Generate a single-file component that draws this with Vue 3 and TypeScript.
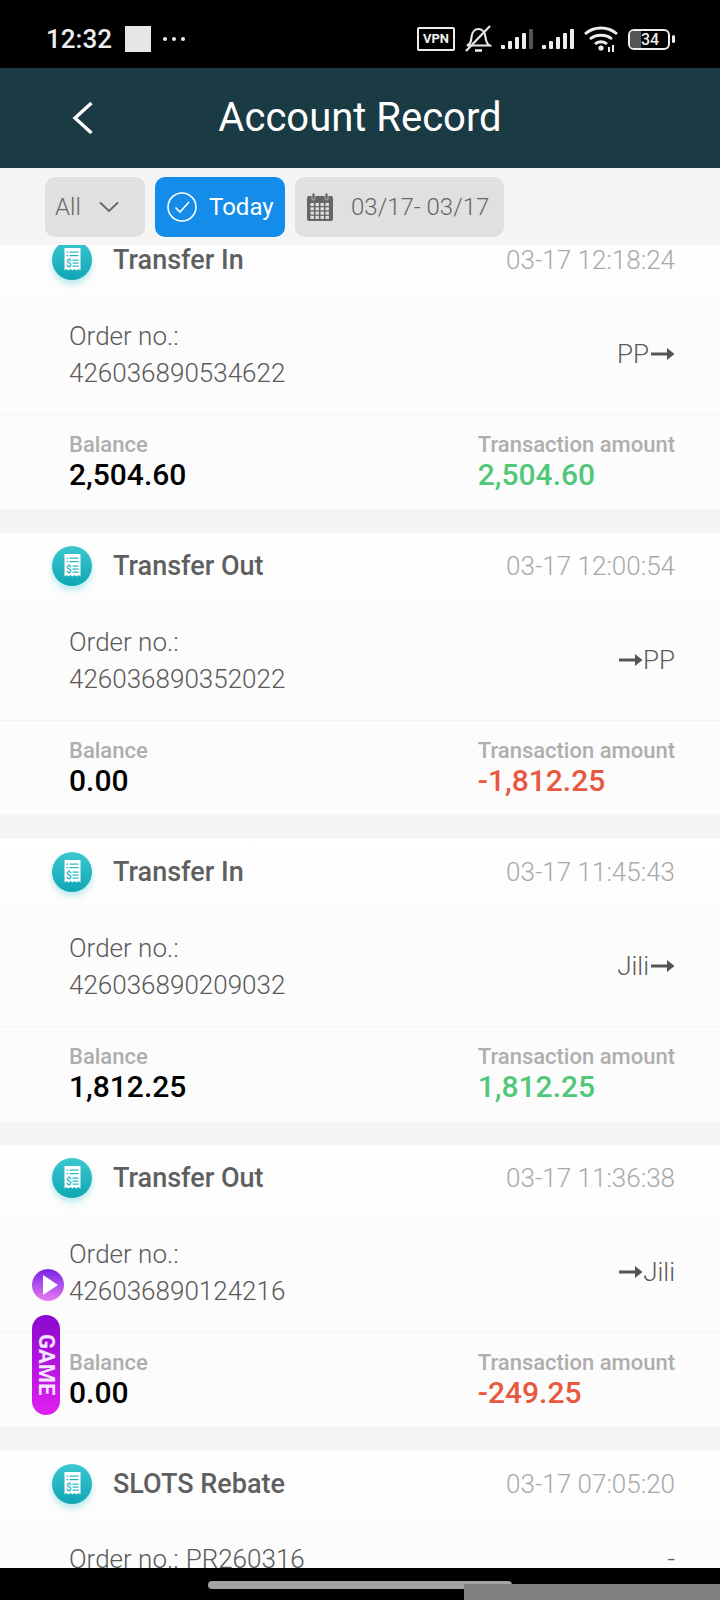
<script setup lang="ts">
interface Row {
  title: string
  time: string
  order: string
  inline?: boolean
  from?: string
  to?: string
  note?: string
  balance: string
  amount: string
  kind: 'in' | 'out'
}

const rows: Row[] = [
  { title: 'Transfer In', time: '03-17 12:18:24', order: '426036890534622', from: 'PP', balance: '2,504.60', amount: '2,504.60', kind: 'in' },
  { title: 'Transfer Out', time: '03-17 12:00:54', order: '426036890352022', to: 'PP', balance: '0.00', amount: '-1,812.25', kind: 'out' },
  { title: 'Transfer In', time: '03-17 11:45:43', order: '426036890209032', from: 'Jili', balance: '1,812.25', amount: '1,812.25', kind: 'in' },
  { title: 'Transfer Out', time: '03-17 11:36:38', order: '426036890124216', to: 'Jili', balance: '0.00', amount: '-249.25', kind: 'out' },
  { title: 'SLOTS Rebate', time: '03-17 07:05:20', order: 'PR260316', inline: true, note: '-', balance: '', amount: '', kind: 'in' },
]

const calCells = [0, 1, 2, 3]
</script>

<template>
  <div class="phone">
    <div class="status">
      <span class="clock">12:32</span>
      <span class="square"></span>
      <span class="dots"><i></i><i></i><i></i></span>
      <div class="status-right">
        <span class="vpn">VPN</span>
        <svg class="bell" width="27" height="28" viewBox="0 0 27 28" fill="none" stroke="#e8e8e8" stroke-width="2.200">
          <path d="M2 20.500c3-1.500 4-3 4.500-8.500.5-5 3.500-8 7-8s6.500 3 7 8c.5 5 1.500 7 4 8.500z" />
          <path d="M10 25.500h7" stroke-width="2.600" />
          <path d="M1 26 25 1" stroke-width="2.200" />
        </svg>
        <svg class="signal" width="33" height="22" viewBox="0 0 33 22">
          <rect x="0" y="17" width="4" height="4" rx="1" fill="#eee" />
          <rect x="7" y="13" width="4" height="8" rx="1" fill="#eee" />
          <rect x="14" y="9" width="4" height="12" rx="1" fill="#eee" />
          <rect x="21" y="5" width="4" height="16" rx="1" fill="#eee" />
          <rect x="28" y="1" width="4" height="20" rx="1" fill="#555" />
        </svg>
        <svg class="signal" width="33" height="22" viewBox="0 0 33 22">
          <rect x="0" y="17" width="4" height="4" rx="1" fill="#eee" />
          <rect x="7" y="13" width="4" height="8" rx="1" fill="#eee" />
          <rect x="14" y="9" width="4" height="12" rx="1" fill="#eee" />
          <rect x="21" y="5" width="4" height="16" rx="1" fill="#eee" />
          <rect x="28" y="1" width="4" height="20" rx="1" fill="#eee" />
        </svg>
        <svg class="wifi" width="34" height="26" viewBox="0 0 34 26" fill="none" stroke="#eee" stroke-width="2.800">
          <path d="M1 8c9-8 23-8 32 0" />
          <path d="M6 13c6-5 16-5 22 0" />
          <path d="M11 18c3-3 9-3 12 0" />
          <circle cx="17" cy="22" r="2.600" fill="#eee" stroke="none" />
          <path d="M25 21v5M29 19v7" stroke-width="2" />
        </svg>
        <div class="battery">
          <div class="battery-body"><span class="battery-fill"></span><span class="battery-num">34</span></div>
          <span class="battery-tip"></span>
        </div>
      </div>
    </div>

    <header class="topbar">
      <svg class="back" width="22" height="34" viewBox="0 0 22 34" fill="none" stroke="#fff" stroke-width="3.400">
        <path d="M19.500 2 3 17l16.500 15" />
      </svg>
      <h1>Account Record</h1>
    </header>

    <div class="filters">
      <div class="chip chip-all">
        <span>All</span>
        <svg width="20" height="12" viewBox="0 0 20 12" fill="none" stroke="#666" stroke-width="1.800"><path d="M1 1.500 10 10l9-8.500" /></svg>
      </div>
      <div class="chip chip-today">
        <svg width="30" height="30" viewBox="0 0 30 30" fill="none" stroke="#fff" stroke-width="1.600">
          <circle cx="15" cy="15" r="14" />
          <path d="M8.500 15.500 13 20l9-10" />
        </svg>
        <span>Today</span>
      </div>
      <div class="chip chip-date">
        <svg width="28" height="30" viewBox="0 0 28 30">
          <rect x="1" y="4" width="26" height="25" rx="2" fill="#666" />
          <rect x="6" y="1" width="3" height="7" rx="1.500" fill="#666" stroke="#e0e0e0" stroke-width=".6" />
          <rect x="19" y="1" width="3" height="7" rx="1.500" fill="#666" stroke="#e0e0e0" stroke-width=".6" />
          <g fill="#e0e0e0">
            <template v-for="r in calCells" :key="r">
              <rect v-for="c in calCells" :key="c" :x="4.500 + c * 5" :y="11 + r * 4.300" width="3.400" height="3" />
            </template>
          </g>
        </svg>
        <span>03/17- 03/17</span>
      </div>
    </div>

    <div class="list">
      <div class="list-inner">
        <section v-for="row in rows" :key="row.time" class="card">
          <div class="card-head">
            <div class="badge">
              <svg width="19" height="24" viewBox="0 0 18 24">
                <path d="M1 0h16v22.500l-2-1.500-2 1.500-2-1.500-2 1.500-2-1.500-2 1.500-2-1.500-2 1.500z" fill="#fff" />
                <g fill="#20b6c1">
                  <rect x="3" y="3.500" width="1.600" height="1.200" />
                  <rect x="6" y="3.500" width="9" height="1.200" />
                  <rect x="3" y="7" width="1.600" height="1.200" />
                  <rect x="6" y="7" width="9" height="1.200" />
                  <rect x="9" y="11.500" width="6" height="1.200" />
                  <rect x="9" y="14.500" width="6" height="1.200" />
                  <rect x="9" y="17.500" width="6" height="1.200" />
                </g>
                <text x="2.500" y="19" font-size="10" font-weight="500" fill="#20b6c1" font-family="Roboto, sans-serif">$</text>
              </svg>
            </div>
            <span class="title">{{ row.title }}</span>
            <span class="time">{{ row.time }}</span>
          </div>

          <div class="card-order" :class="{ top: row.inline }">
            <div class="order-text" :class="{ inline: row.inline }">
              <span>Order no.:</span>
              <span>{{ row.order }}</span>
            </div>
            <div class="route">
              <template v-if="row.note">{{ row.note }}</template>
              <template v-else>
                <span v-if="row.from">{{ row.from }}</span>
                <svg width="26" height="12" viewBox="0 0 26 12"><path d="M2 4.500h16V0l7.500 6-7.500 6V7.500H2z" fill="#555" /></svg>
                <span v-if="row.to">{{ row.to }}</span>
              </template>
            </div>
          </div>

          <div v-if="row.balance" class="card-foot">
            <div>
              <p class="label">Balance</p>
              <p class="balance">{{ row.balance }}</p>
            </div>
            <div class="amount-col">
              <p class="label">Transaction amount</p>
              <p class="amount" :class="row.kind">{{ row.amount }}</p>
            </div>
          </div>
        </section>
      </div>

      <div class="game-float">
        <span class="play"><i></i></span>
        <span class="game">GAME</span>
      </div>
    </div>

    <div class="navbar">
      <span class="home"></span>
      <span class="patch"></span>
    </div>
  </div>
</template>

<style scoped>
* {
  box-sizing: border-box;
}
.phone {
  width: 720px;
  height: 1600px;
  display: flex;
  flex-direction: column;
  overflow: hidden;
  background: #f5f5f5;
  font-family: Roboto, "Liberation Sans", sans-serif;
}
.status {
  height: 68px;
  flex: none;
  background: #000;
  color: #eee;
  display: flex;
  align-items: center;
  padding: 10px 45px 0 46px;
}
.clock {
  font-size: 26px;
  font-weight: 500;
  width: 79px;
}
.square {
  width: 26px;
  height: 26px;
  background: #e6e6e6;
}
.dots {
  display: flex;
  gap: 5px;
  margin-left: 12px;
}
.dots i {
  width: 4px;
  height: 4px;
  border-radius: 50%;
  background: #eee;
}
.status-right {
  margin-left: auto;
  display: flex;
  align-items: center;
}
.vpn {
  width: 38px;
  height: 24px;
  border: 2px solid #eee;
  border-radius: 2px;
  font-size: 13px;
  font-weight: 700;
  line-height: 20px;
  text-align: center;
  margin-right: 10px;
}
.bell {
  margin-right: 9px;
}
.signal {
  margin-right: 8px;
}
.wifi {
  margin: 0 10px 0 1px;
}
.battery {
  display: flex;
  align-items: center;
  gap: 2px;
}
.battery-body {
  position: relative;
  width: 42px;
  height: 21px;
  border: 2px solid #eee;
  border-radius: 6px;
  overflow: hidden;
}
.battery-fill {
  position: absolute;
  left: 0;
  top: 0;
  bottom: 0;
  width: 11px;
  background: #555;
}
.battery-num {
  position: relative;
  display: block;
  text-align: center;
  font-size: 16px;
  font-weight: 500;
  line-height: 18px;
  padding-left: 2px;
}
.battery-tip {
  width: 3px;
  height: 8px;
  border-radius: 2px;
  background: #eee;
}
.topbar {
  height: 100px;
  flex: none;
  background: #1a3a44;
  display: flex;
  align-items: center;
  justify-content: center;
  padding-bottom: 2px;
  position: relative;
}
.topbar h1 {
  margin: 0;
  color: #fff;
  font-size: 40px;
  font-weight: 400;
}
.back {
  position: absolute;
  left: 72px;
  top: 33px;
}
.filters {
  height: 77px;
  flex: none;
  background: #f5f5f5;
  display: flex;
  gap: 10px;
  padding: 9px 0 0 45px;
  position: relative;
  z-index: 1;
}
.chip {
  height: 60px;
  border-radius: 10px;
  background: #e0e0e0;
  color: #666;
  font-size: 24px;
  font-weight: 300;
  display: flex;
  align-items: center;
}
.chip-all {
  width: 100px;
  padding-left: 10px;
  gap: 18px;
}
.chip-today {
  width: 130px;
  background: #148cea;
  color: #fff;
  font-weight: 400;
  padding-left: 12px;
  gap: 12px;
}
.chip-date {
  width: 209px;
  padding-left: 11px;
  gap: 17px;
}
.list {
  flex: 1;
  min-height: 0;
  overflow: hidden;
  position: relative;
}
.list-inner {
  margin-top: -18px;
  display: flex;
  flex-direction: column;
  gap: 24px;
}
.card {
  height: 282px;
  flex: none;
  background: linear-gradient(180deg, #fff, #fcfcfc 80px);
}
.card-head {
  height: 64px;
  display: flex;
  align-items: center;
  padding: 1px 45px 0 52px;
}
.badge {
  width: 40px;
  height: 40px;
  border-radius: 50%;
  flex: none;
  background: linear-gradient(180deg, #3cc7d0, #0fa6b4);
  box-shadow: 0 4px 6px rgba(20, 190, 200, 0.3);
  display: flex;
  align-items: center;
  justify-content: center;
}
.title {
  margin-left: 21px;
  font-size: 27px;
  font-weight: 500;
  color: #5f5f5f;
}
.time {
  margin-left: auto;
  font-size: 26px;
  font-weight: 300;
  color: #a9a9a9;
}
.card-order {
  height: 124px;
  border-bottom: 1px solid #f3f3f3;
  display: flex;
  align-items: center;
  justify-content: space-between;
  padding: 3px 45px 0 69px;
}
.card-order.top {
  align-items: flex-start;
  padding-top: 29px;
}
.order-text {
  display: flex;
  flex-direction: column;
  gap: 7px;
  font-size: 26px;
  font-weight: 300;
  color: #5a5a5a;
}
.order-text.inline {
  flex-direction: row;
  gap: 7px;
}
.route {
  display: flex;
  align-items: center;
  font-size: 26px;
  font-weight: 300;
  color: #5a5a5a;
}
.card-foot {
  height: 94px;
  display: flex;
  justify-content: space-between;
  padding: 17px 45px 0 69px;
}
.label {
  margin: 0;
  font-size: 22px;
  font-weight: 500;
  line-height: 26px;
  color: #aeaeae;
}
.balance,
.amount {
  margin: 0;
  font-size: 30px;
  font-weight: 500;
  line-height: 34px;
  color: #000;
}
.amount.in {
  color: #50c878;
}
.amount.out {
  color: #e8583e;
}
.game-float {
  position: absolute;
  left: 32px;
  top: 1024px;
  display: flex;
  flex-direction: column;
  align-items: flex-start;
  gap: 14px;
}
.play {
  width: 32px;
  height: 32px;
  border-radius: 50%;
  background: linear-gradient(180deg, #7a22e8, #e67cf0);
  display: flex;
  align-items: center;
  justify-content: center;
}
.play i {
  width: 0;
  height: 0;
  margin-left: 4px;
  border-left: 15px solid #fff;
  border-top: 10px solid transparent;
  border-bottom: 10px solid transparent;
}
.game {
  width: 28px;
  height: 100px;
  border-radius: 14px;
  background: linear-gradient(180deg, #8a08d0, #e020f0);
  color: #f4e4ff;
  font-size: 22px;
  font-weight: 700;
  writing-mode: vertical-rl;
  text-align: center;
  line-height: 28px;
}
.navbar {
  height: 32px;
  flex: none;
  background: #000;
  position: relative;
  z-index: 2;
}
.home {
  position: absolute;
  left: 208px;
  top: 13px;
  width: 304px;
  height: 8px;
  border-radius: 4px;
  background: #a3a3a3;
}
.patch {
  position: absolute;
  left: 464px;
  top: 16px;
  right: 0;
  bottom: 0;
  background: #808080;
}
</style>
